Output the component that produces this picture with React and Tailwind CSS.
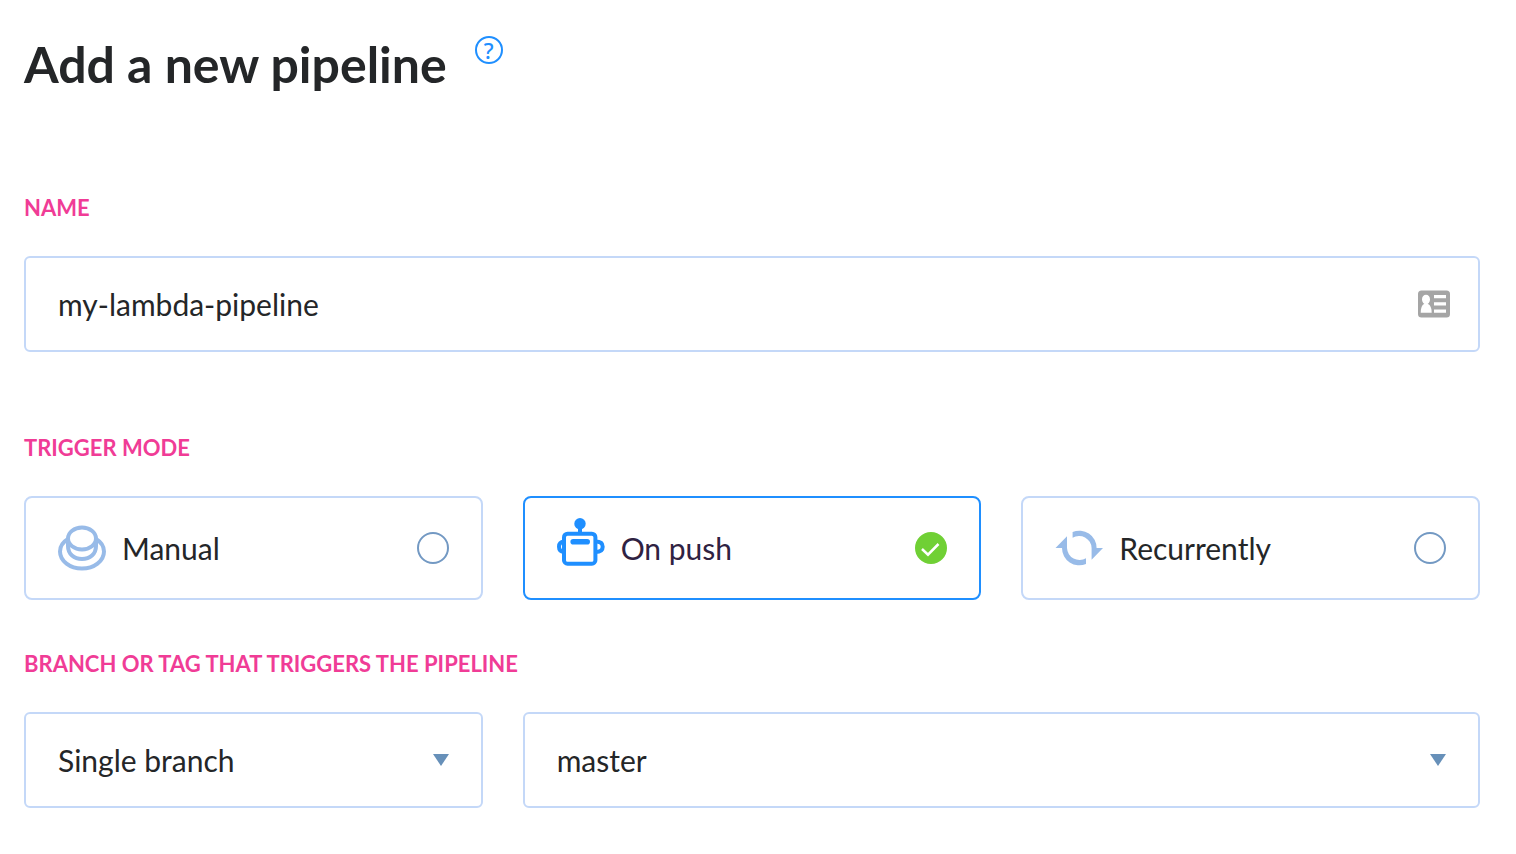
import React, { useState } from 'react';

const ManualIcon = () => (
  <svg viewBox="0 -6 48 60" className="h-15 w-12 shrink-0 text-[#98bbe8]" fill="none" stroke="currentColor" strokeWidth="4" aria-hidden="true">
    <ellipse cx="24" cy="14.500" rx="14" ry="11" />
    <path d="M10 14V22C10 30 16 35 24 35S38 30 38 22V14" />
    <path d="M10 15C5 18 2 22.500 2 27.500C2 37 12 44.500 24 44.500S46 37 46 27.500C46 22.500 43 18 38 15" />
  </svg>
);

const PushIcon = () => (
  <svg viewBox="0 -6 48 60" className="h-15 w-12 shrink-0 text-[#1f8fff]" fill="none" stroke="currentColor" strokeWidth="4" aria-hidden="true">
    <rect x="7" y="9.7" width="31.4" height="30" rx="3.5" />
    <path d="M23 4V10" />
    <path d="M7 17.600C3.500 18 2 20 2 22.700S3.500 27.600 7 28" />
    <path d="M38.500 17.600C43.500 17.600 45.700 19.800 45.700 22.700S43.500 28 38.500 28" />
    <circle cx="23" cy="-0.3" r="5.7" fill="currentColor" stroke="none" />
    <rect x="13.400" y="15" width="19.600" height="5.600" rx="2.800" fill="currentColor" stroke="none" />
  </svg>
);

const RecurrentIcon = () => (
  <svg viewBox="-1 -6 48 60" className="h-15 w-12 shrink-0 text-[#98bbe8]" fill="currentColor" aria-hidden="true">
    <path d="M-.5 24L11 12.300V24A12.500 12.500 0 0 0 30 34.200V40A17.300 17.300 0 0 1 6 24Z" />
    <path d="M-.5 24L11 12.300V24A12.500 12.500 0 0 0 30 34.200V40A17.300 17.300 0 0 1 6 24Z" transform="rotate(180 23.3 24)" />
  </svg>
);

const ContactIcon = () => (
  <svg viewBox="0 0 32 28" className="pointer-events-none absolute top-1/2 right-[30px] h-7 w-8 -translate-y-1/2" aria-hidden="true">
    <rect y="0.500" width="32" height="27" rx="3.500" fill="#a5a5a5" />
    <g fill="#fff">
      <ellipse cx="8" cy="9.500" rx="4" ry="4.800" />
      <path d="M2.700 22.800C2.700 18 4 15 6 14H10C12.300 15 13.700 18 13.700 22.800Z" />
      <path d="M16 5H28V8.300H16ZM16 12.200H28V15.500H16ZM16 19.400H28V22.800H16Z" />
    </g>
  </svg>
);

const MODES = [
  { id: 'manual', label: 'Manual', Icon: ManualIcon },
  { id: 'push', label: 'On push', Icon: PushIcon },
  { id: 'recurrent', label: 'Recurrently', Icon: RecurrentIcon },
];

const captionClass = 'block text-[22px] leading-8 font-bold text-[#f03c96] uppercase';
const fieldClass =
  'h-24 w-full appearance-none rounded-md border-2 border-[#c4d8f8] bg-white px-8 text-[30px] text-[#242628] outline-none focus:border-[#1f8fff]';

function TriggerCard({ mode, checked, onSelect }) {
  const { id, label, Icon } = mode;
  return (
    <label
      className={`flex h-26 cursor-pointer items-center gap-4 rounded-lg border-2 px-8 ${
        checked ? 'border-[#1f8fff] text-[#2f2242]' : 'border-[#c4d8f8]'
      }`}
    >
      <Icon />
      <span className="flex-1 text-[30px] leading-9">{label}</span>
      <span className="relative size-8 shrink-0">
        <input
          type="radio"
          name="trigger"
          value={id}
          checked={checked}
          onChange={() => onSelect(id)}
          className="block size-8 cursor-pointer appearance-none rounded-full border-2 border-[#7399c3] checked:border-[#70d035] checked:bg-[#70d035]"
        />
        {checked && (
          <svg viewBox="0 0 32 32" className="pointer-events-none absolute inset-0" fill="none" stroke="#fff" strokeWidth="2.500" aria-hidden="true">
            <path d="M7 17L13 22.700L23.500 12" />
          </svg>
        )}
      </span>
    </label>
  );
}

function SelectField({ label, value, onChange, options, className }) {
  return (
    <div className={`relative ${className || ''}`}>
      <select aria-label={label} value={value} onChange={(e) => onChange(e.target.value)} className={fieldClass}>
        {options.map((option) => (
          <option key={option}>{option}</option>
        ))}
      </select>
      <svg viewBox="0 0 16 12" className="pointer-events-none absolute top-1/2 right-[34px] h-3 w-4 -translate-y-1/2" fill="#6790b9" aria-hidden="true">
        <path d="M0 0H16L8 12Z" />
      </svg>
    </div>
  );
}

function App() {
  const [name, setName] = useState('my-lambda-pipeline');
  const [trigger, setTrigger] = useState('push');
  const [branchType, setBranchType] = useState('Single branch');
  const [branch, setBranch] = useState('master');

  return (
    <main className="min-h-screen bg-white pt-8 pr-9 pb-12 pl-6 font-['Lato',sans-serif] text-[#242628]">
      <header className="flex items-start gap-7">
        <h1 className="text-[50px] leading-16 font-bold">Add a new pipeline</h1>
        <button
          type="button"
          aria-label="Help"
          className="mt-1 flex size-7 items-center justify-center rounded-full border-2 border-[#1f8fff] font-['Noto_Sans',sans-serif] text-[22px] leading-6 font-medium text-[#1f8fff]"
        >
          ?
        </button>
      </header>

      <form onSubmit={(e) => e.preventDefault()}>
        <div className="mt-24">
          <label htmlFor="pipeline-name" className={captionClass}>Name</label>
          <div className="relative mt-8">
            <input
              id="pipeline-name"
              type="text"
              value={name}
              onChange={(e) => setName(e.target.value)}
              className={fieldClass}
            />
            <ContactIcon />
          </div>
        </div>

        <fieldset className="mt-20">
          <legend className={captionClass}>Trigger mode</legend>
          <div className="mt-8 grid grid-cols-3 gap-10">
            {MODES.map((mode) => (
              <TriggerCard key={mode.id} mode={mode} checked={trigger === mode.id} onSelect={setTrigger} />
            ))}
          </div>
        </fieldset>

        <fieldset className="mt-12">
          <legend className={captionClass}>Branch or tag that triggers the pipeline</legend>
          <div className="mt-8 grid grid-cols-3 gap-10">
            <SelectField
              label="Branch type"
              value={branchType}
              onChange={setBranchType}
              options={['Single branch', 'Wildcard', 'Tag']}
            />
            <SelectField
              label="Branch"
              value={branch}
              onChange={setBranch}
              options={['master', 'develop']}
              className="col-span-2"
            />
          </div>
        </fieldset>
      </form>
    </main>
  );
}

export default App;
